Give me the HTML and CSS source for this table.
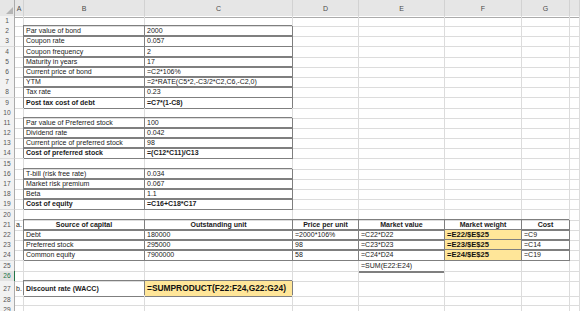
FILE: index.html
```html
<!DOCTYPE html>
<html>
<head>
<meta charset="utf-8">
<link rel="stylesheet" href="styles.css">
</head>
<body>
<div class="sheet">
  <div class="r hd">
    <div class="ch corner"><svg width="14" height="15" viewBox="0 0 14 15"><polygon points="6,14 13,14 13,7" fill="#b5b5b5"/></svg></div>
    <div class="ch">A</div><div class="ch">B</div><div class="ch">C</div><div class="ch">D</div><div class="ch">E</div><div class="ch">F</div><div class="ch">G</div><div class="ch"></div>
  </div>
  <div class="r"><div class="rh">1</div><div></div><div></div><div></div><div></div><div></div><div></div><div></div><div></div></div>
  <div class="r"><div class="rh">2</div><div></div><div class="bx">Par value of bond</div><div class="bx">2000</div><div></div><div></div><div></div><div></div><div></div></div>
  <div class="r"><div class="rh">3</div><div></div><div class="bx">Coupon rate</div><div class="bx">0.057</div><div></div><div></div><div></div><div></div><div></div></div>
  <div class="r"><div class="rh">4</div><div></div><div class="bx">Coupon frequency</div><div class="bx">2</div><div></div><div></div><div></div><div></div><div></div></div>
  <div class="r"><div class="rh">5</div><div></div><div class="bx">Maturity in years</div><div class="bx">17</div><div></div><div></div><div></div><div></div><div></div></div>
  <div class="r"><div class="rh">6</div><div></div><div class="bx">Current price of bond</div><div class="bx">=C2*106%</div><div></div><div></div><div></div><div></div><div></div></div>
  <div class="r"><div class="rh">7</div><div></div><div class="bx">YTM</div><div class="bx">=2*RATE(C5*2,-C3/2*C2,C6,-C2,0)</div><div></div><div></div><div></div><div></div><div></div></div>
  <div class="r"><div class="rh">8</div><div></div><div class="bx">Tax rate</div><div class="bx">0.23</div><div></div><div></div><div></div><div></div><div></div></div>
  <div class="r"><div class="rh">9</div><div></div><div class="bx b">Post tax cost of debt</div><div class="bx b">=C7*(1-C8)</div><div></div><div></div><div></div><div></div><div></div></div>
  <div class="r"><div class="rh">10</div><div></div><div></div><div></div><div></div><div></div><div></div><div></div><div></div></div>
  <div class="r"><div class="rh">11</div><div></div><div class="bx">Par value of Preferred stock</div><div class="bx">100</div><div></div><div></div><div></div><div></div><div></div></div>
  <div class="r"><div class="rh">12</div><div></div><div class="bx">Dividend rate</div><div class="bx">0.042</div><div></div><div></div><div></div><div></div><div></div></div>
  <div class="r"><div class="rh">13</div><div></div><div class="bx">Current price of preferred stock</div><div class="bx">98</div><div></div><div></div><div></div><div></div><div></div></div>
  <div class="r"><div class="rh">14</div><div></div><div class="bx b">Cost of preferred stock</div><div class="bx b">=(C12*C11)/C13</div><div></div><div></div><div></div><div></div><div></div></div>
  <div class="r"><div class="rh">15</div><div></div><div></div><div></div><div></div><div></div><div></div><div></div><div></div></div>
  <div class="r"><div class="rh">16</div><div></div><div class="bx">T-bill (risk free rate)</div><div class="bx">0.034</div><div></div><div></div><div></div><div></div><div></div></div>
  <div class="r"><div class="rh">17</div><div></div><div class="bx">Market risk premium</div><div class="bx">0.067</div><div></div><div></div><div></div><div></div><div></div></div>
  <div class="r"><div class="rh">18</div><div></div><div class="bx">Beta</div><div class="bx">1.1</div><div></div><div></div><div></div><div></div><div></div></div>
  <div class="r"><div class="rh">19</div><div></div><div class="bx b">Cost of equity</div><div class="bx b">=C16+C18*C17</div><div></div><div></div><div></div><div></div><div></div></div>
  <div class="r"><div class="rh">20</div><div></div><div></div><div></div><div></div><div></div><div></div><div></div><div></div></div>
  <div class="r"><div class="rh">21</div><div class="ac">a.</div><div class="bx b ctr">Source of capital</div><div class="bx b ctr">Outstanding unit</div><div class="bx b ctr">Price per unit</div><div class="bx b ctr">Market value</div><div class="bx b ctr">Market weight</div><div class="bx b ctr">Cost</div><div></div></div>
  <div class="r"><div class="rh">22</div><div></div><div class="bx">Debt</div><div class="bx">180000</div><div class="bx">=2000*106%</div><div class="bx">=C22*D22</div><div class="bx y">=E22/$E$25</div><div class="bx">=C9</div><div></div></div>
  <div class="r"><div class="rh">23</div><div></div><div class="bx">Preferred stock</div><div class="bx">295000</div><div class="bx">98</div><div class="bx">=C23*D23</div><div class="bx y">=E23/$E$25</div><div class="bx">=C14</div><div></div></div>
  <div class="r"><div class="rh">24</div><div></div><div class="bx">Common equity</div><div class="bx">7900000</div><div class="bx">58</div><div class="bx">=C24*D24</div><div class="bx y">=E24/$E$25</div><div class="bx">=C19</div><div></div></div>
  <div class="r"><div class="rh">25</div><div></div><div></div><div></div><div></div><div class="sumb">=SUM(E22:E24)</div><div></div><div></div><div></div></div>
  <div class="r"><div class="rh act">26</div><div></div><div></div><div></div><div></div><div></div><div></div><div></div><div></div></div>
  <div class="r tall"><div class="rh">27</div><div class="ac">b.</div><div class="bx b">Discount rate (WACC)</div><div class="bx yb">=SUMPRODUCT(F22:F24,G22:G24)</div><div></div><div></div><div></div><div></div><div></div></div>
  <div class="r"><div class="rh">28</div><div></div><div></div><div></div><div></div><div></div><div></div><div></div><div></div></div>
  <div class="r"><div class="rh">29</div><div></div><div></div><div></div><div></div><div></div><div></div><div></div><div></div></div>
</div>
</body>
</html>
```

FILE: styles.css
```css
html, body {
  margin: 0;
  padding: 0;
  background: #ffffff;
}
body {
  font-family: "Liberation Sans", Arial, sans-serif;
  font-size: 7px;
  color: #1a1a1a;
  overflow: hidden;
  width: 580px;
  height: 311px;
}
.sheet {
  width: 580px;
}
.r {
  display: grid;
  grid-template-columns: 15px 9px 121px 148px 66px 86px 77px 48px 10px;
  height: 10.2px;
}
.r > div {
  box-sizing: border-box;
  border-right: 1px solid #dcdcdc;
  border-bottom: 1px solid #dcdcdc;
  white-space: nowrap;
  line-height: 10px;
  padding-left: 2px;
  min-width: 0;
}
.r.hd {
  height: 16px;
  background: #e6e6e6;
}
.r.hd > .ch {
  text-align: center;
  color: #4a4a4a;
  line-height: 17px;
  padding-left: 0;
  border-right-color: #d2d2d2;
  border-bottom-color: #ababab;
}
.r.hd > .corner {
  border-right-color: #ababab;
}
.corner svg {
  display: block;
}
.r > .rh {
  background: #f2f2f2;
  color: #555555;
  text-align: center;
  padding-left: 0;
  font-size: 6.6px;
  border-right-color: #ababab;
  border-bottom-color: #dcdcdc;
}
.r > .rh.act {
  color: #217346;
  background: #e2e2e2;
  border-right: 1px solid #217346;
}
.r > .ac {
  padding-left: 1px;
}
.r > .bx {
  border-right-color: #7f7f7f;
  border-bottom-color: #7f7f7f;
  box-shadow: -1px -1px 0 #7f7f7f;
}
.b {
  font-weight: bold;
}
.r > .ctr {
  text-align: center;
  padding-left: 0;
}
.r > .y {
  background: #ffe699;
  font-weight: bold;
  font-size: 7.6px;
  color: #111111;
}
.r > .sumb {
  border-bottom-color: #7f7f7f;
  box-shadow: 0 1px 0 #7f7f7f;
}
.r.tall {
  height: 14px;
}
.r.tall > div {
  line-height: 15px;
}
.r > .yb {
  background: #ffe699;
  font-weight: bold;
  font-size: 8.4px;
  color: #111111;
}
```
